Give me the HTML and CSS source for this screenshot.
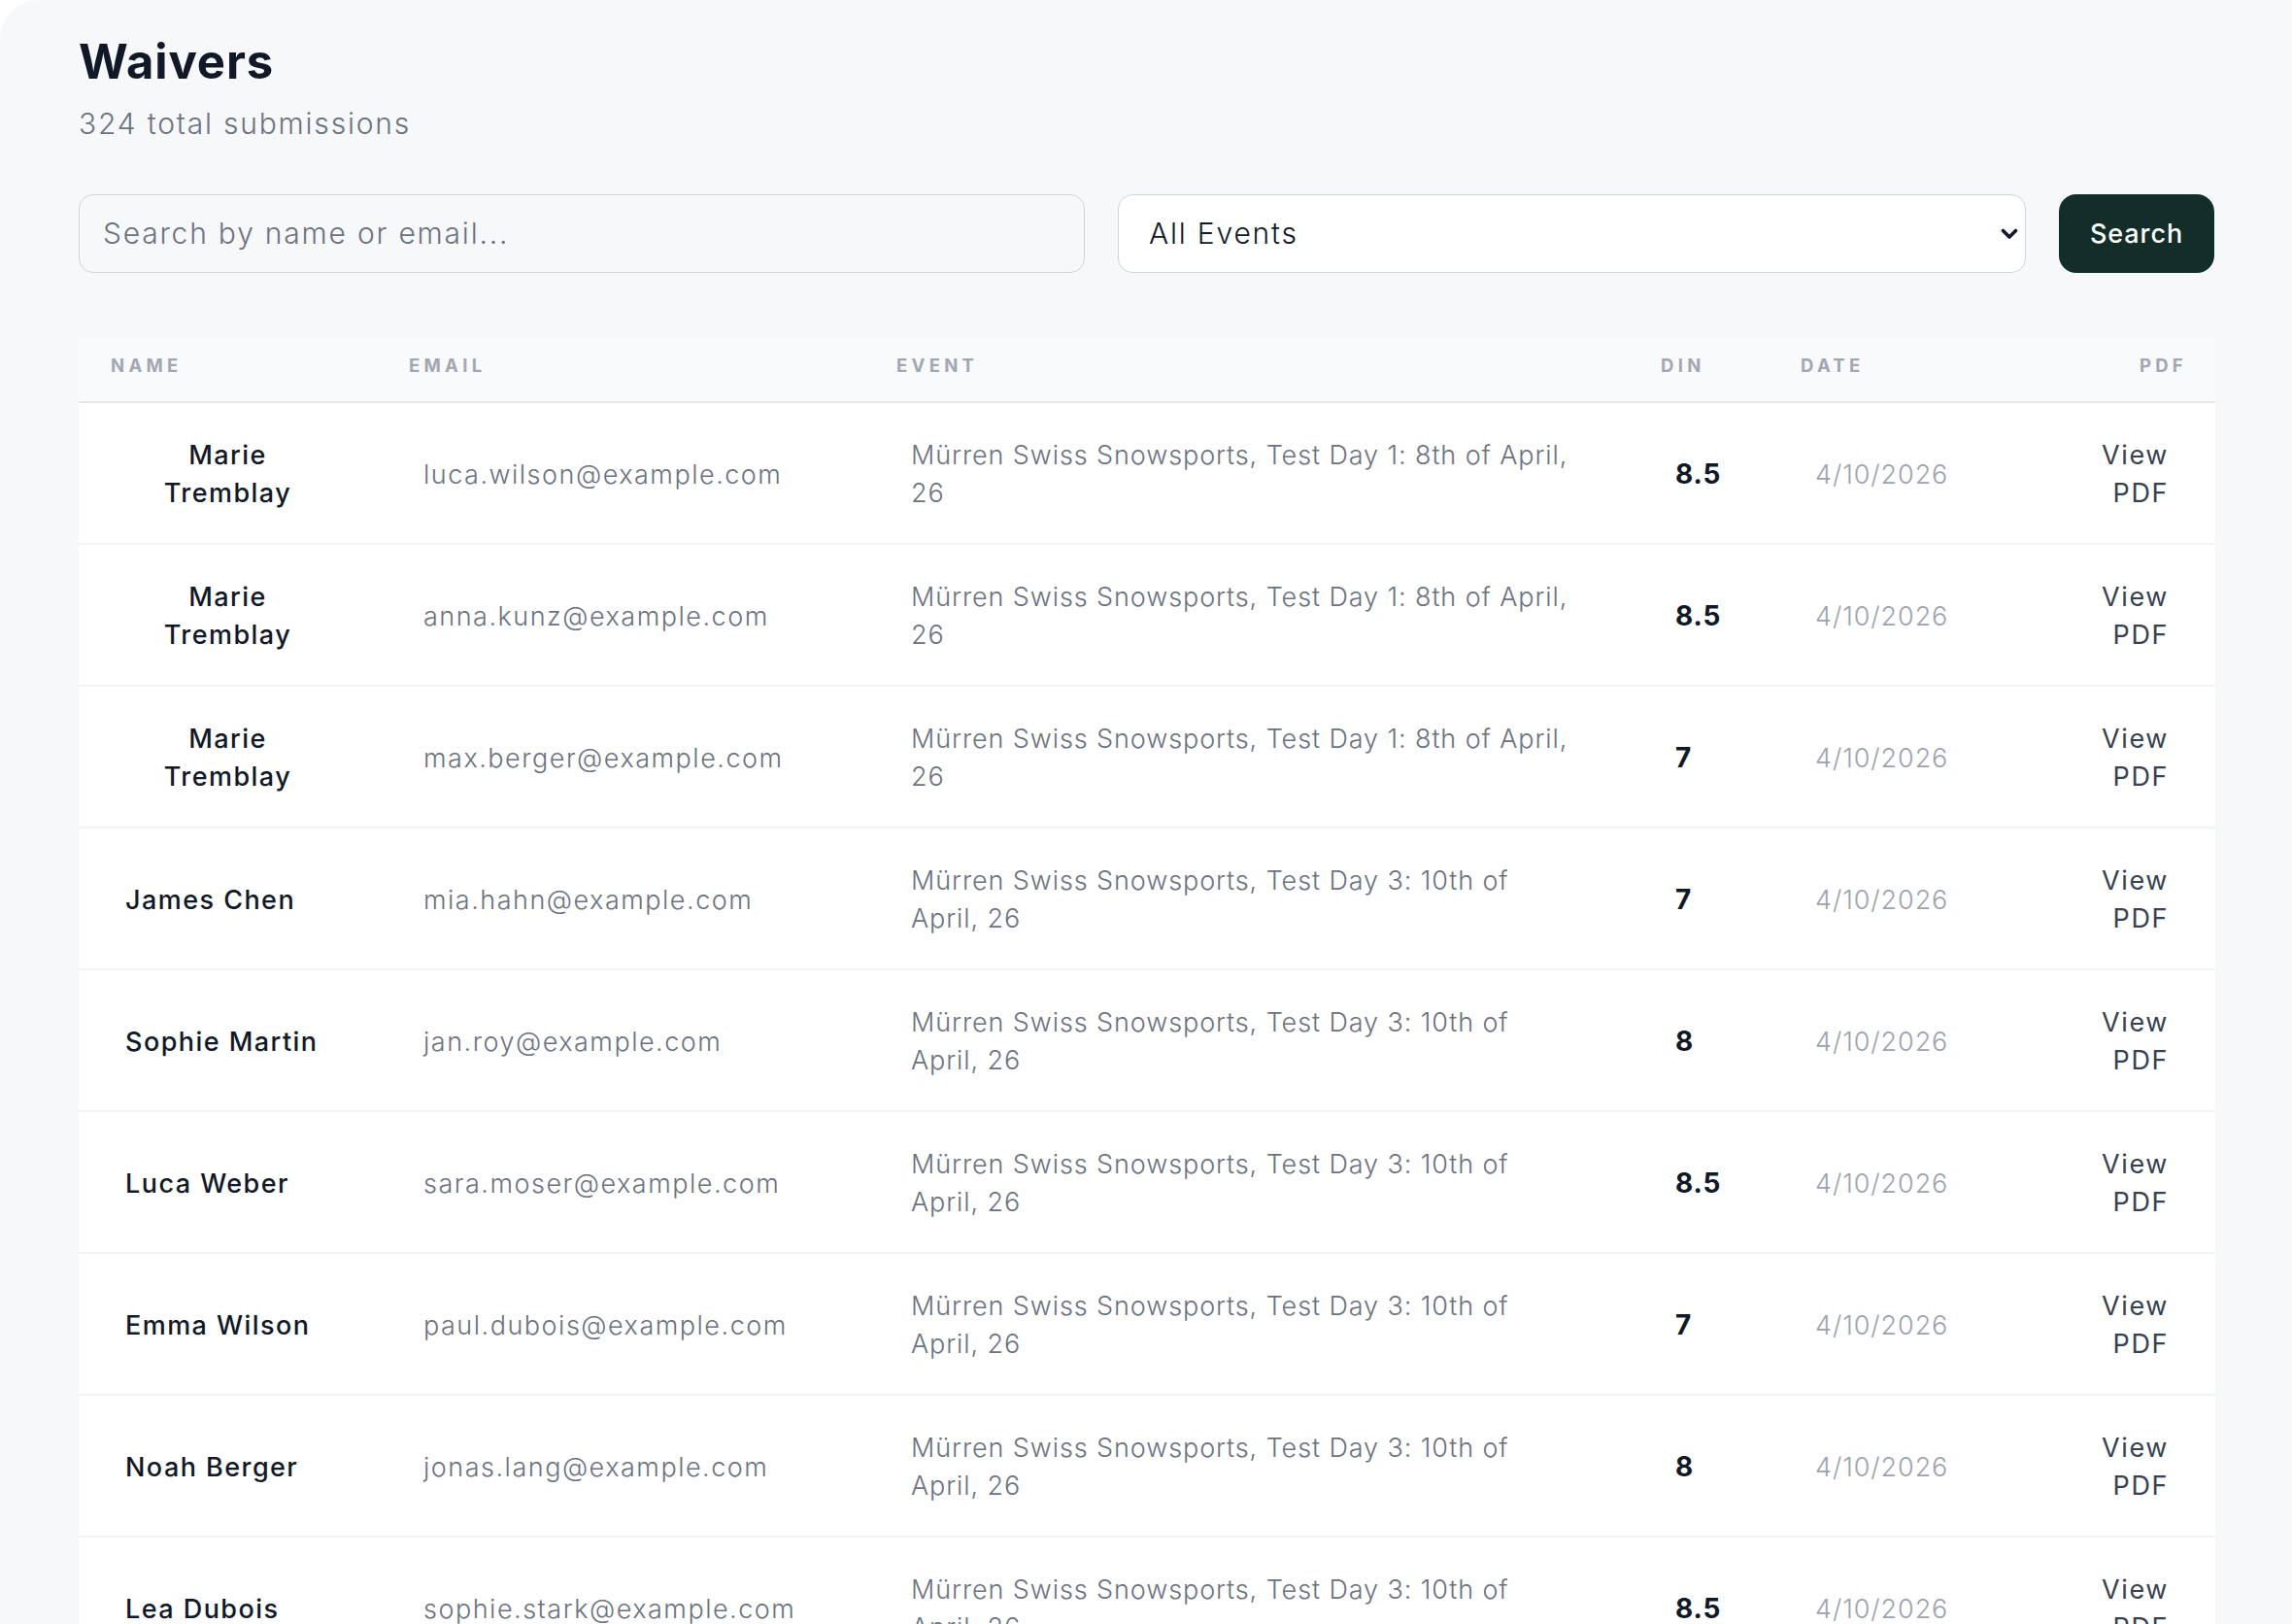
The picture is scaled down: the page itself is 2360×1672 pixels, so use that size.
FILE: index.html
```html
<!DOCTYPE html>
<html lang="en">
<head>
    <meta charset="UTF-8">
    <title>Waivers</title>
    <meta name="viewport" content="width=device-width, initial-scale=1.0">
    <link rel="stylesheet" href="styles.css">
</head>
<body>
    <main class="main">
        <h1 class="title">Waivers</h1>
        <p class="subtitle">324 total submissions</p>

        <form class="toolbar">
            <input class="search-input" type="text" name="q" placeholder="Search by name or email...">
            <div class="select-wrap">
                <select class="event-select" name="event">
                    <option>All Events</option>
                    <option>Mürren Swiss Snowsports, Test Day 1: 8th of April, 26</option>
                    <option>Mürren Swiss Snowsports, Test Day 3: 10th of April, 26</option>
                </select>
                <svg class="select-arrow" width="18" height="12" viewBox="0 0 18 12" fill="none" stroke="#111827" stroke-width="3.6" stroke-linecap="round" stroke-linejoin="round"><path d="M2.5 2.5 9 9l6.5-6.5"/></svg>
            </div>
            <button class="search-btn" type="submit">Search</button>
        </form>

        <table class="waivers">
            <colgroup>
                <col class="col-name">
                <col class="col-email">
                <col class="col-event">
                <col class="col-din">
                <col class="col-date">
                <col class="col-pdf">
            </colgroup>
            <thead>
                <tr>
                    <th>Name</th>
                    <th>Email</th>
                    <th>Event</th>
                    <th>DIN</th>
                    <th>Date</th>
                    <th class="right">PDF</th>
                </tr>
            </thead>
            <tbody>
                <tr>
                    <td><span class="name">Marie Tremblay</span></td>
                    <td class="email">luca.wilson@example.com</td>
                    <td class="event">Mürren Swiss Snowsports, Test Day 1: 8th of April, 26</td>
                    <td class="din">8.5</td>
                    <td class="date">4/10/2026</td>
                    <td class="right"><a class="pdf-link" href="#">View PDF</a></td>
                </tr>
                <tr>
                    <td><span class="name">Marie Tremblay</span></td>
                    <td class="email">anna.kunz@example.com</td>
                    <td class="event">Mürren Swiss Snowsports, Test Day 1: 8th of April, 26</td>
                    <td class="din">8.5</td>
                    <td class="date">4/10/2026</td>
                    <td class="right"><a class="pdf-link" href="#">View PDF</a></td>
                </tr>
                <tr>
                    <td><span class="name">Marie Tremblay</span></td>
                    <td class="email">max.berger@example.com</td>
                    <td class="event">Mürren Swiss Snowsports, Test Day 1: 8th of April, 26</td>
                    <td class="din">7</td>
                    <td class="date">4/10/2026</td>
                    <td class="right"><a class="pdf-link" href="#">View PDF</a></td>
                </tr>
                <tr>
                    <td><span class="name">James Chen</span></td>
                    <td class="email">mia.hahn@example.com</td>
                    <td class="event">Mürren Swiss Snowsports, Test Day 3: 10th of April, 26</td>
                    <td class="din">7</td>
                    <td class="date">4/10/2026</td>
                    <td class="right"><a class="pdf-link" href="#">View PDF</a></td>
                </tr>
                <tr>
                    <td><span class="name">Sophie Martin</span></td>
                    <td class="email">jan.roy@example.com</td>
                    <td class="event">Mürren Swiss Snowsports, Test Day 3: 10th of April, 26</td>
                    <td class="din">8</td>
                    <td class="date">4/10/2026</td>
                    <td class="right"><a class="pdf-link" href="#">View PDF</a></td>
                </tr>
                <tr>
                    <td><span class="name">Luca Weber</span></td>
                    <td class="email">sara.moser@example.com</td>
                    <td class="event">Mürren Swiss Snowsports, Test Day 3: 10th of April, 26</td>
                    <td class="din">8.5</td>
                    <td class="date">4/10/2026</td>
                    <td class="right"><a class="pdf-link" href="#">View PDF</a></td>
                </tr>
                <tr>
                    <td><span class="name">Emma Wilson</span></td>
                    <td class="email">paul.dubois@example.com</td>
                    <td class="event">Mürren Swiss Snowsports, Test Day 3: 10th of April, 26</td>
                    <td class="din">7</td>
                    <td class="date">4/10/2026</td>
                    <td class="right"><a class="pdf-link" href="#">View PDF</a></td>
                </tr>
                <tr>
                    <td><span class="name">Noah Berger</span></td>
                    <td class="email">jonas.lang@example.com</td>
                    <td class="event">Mürren Swiss Snowsports, Test Day 3: 10th of April, 26</td>
                    <td class="din">8</td>
                    <td class="date">4/10/2026</td>
                    <td class="right"><a class="pdf-link" href="#">View PDF</a></td>
                </tr>
                <tr>
                    <td><span class="name">Lea Dubois</span></td>
                    <td class="email">sophie.stark@example.com</td>
                    <td class="event">Mürren Swiss Snowsports, Test Day 3: 10th of April, 26</td>
                    <td class="din">8.5</td>
                    <td class="date">4/10/2026</td>
                    <td class="right"><a class="pdf-link" href="#">View PDF</a></td>
                </tr>
                <tr>
                    <td><span class="name">Tim Keller</span></td>
                    <td class="email">nina.frei@example.com</td>
                    <td class="event">Mürren Swiss Snowsports, Test Day 3: 10th of April, 26</td>
                    <td class="din">7</td>
                    <td class="date">4/10/2026</td>
                    <td class="right"><a class="pdf-link" href="#">View PDF</a></td>
                </tr>
            </tbody>
        </table>
    </main>
</body>
</html>
```

FILE: styles.css
```css
body {
    margin: 0;
    background: #ffffff;
    font-family: Inter, "Noto Sans", sans-serif;
    color: #111827;
}

.main {
    background: #f7f8fa;
    border-top-left-radius: 40px;
    min-height: 100vh;
    padding: 35px 80px 60px 81px;
    box-sizing: border-box;
}

.title {
    margin: 0;
    font-size: 49px;
    font-weight: 700;
    line-height: 1.2;
    color: #111827;
    letter-spacing: 0.9px;
}

.subtitle {
    margin: 13px 0 0;
    font-size: 30px;
    font-weight: 300;
    line-height: 40px;
    color: #6b7280;
    letter-spacing: 1.8px;
}

.toolbar {
    display: flex;
    gap: 34px;
    margin-top: 53px;
    height: 81px;
}

.search-input, .event-select {
    box-sizing: border-box;
    height: 81px;
    border: 1.5px solid #d1d5db;
    border-radius: 15px;
    font-family: inherit;
    font-size: 30px;
    font-weight: 300;
    letter-spacing: 1.8px;
    color: #111827;
}

.search-input {
    flex: 0 0 1036px;
    background: #f7f8fa;
    padding: 0 24px;
}

.search-input::placeholder {
    color: #6b7280;
}

.select-wrap {
    flex: 1;
    position: relative;
    display: flex;
}

.event-select {
    width: 100%;
    appearance: none;
    background: #ffffff;
    padding: 0 50px 0 31px;
}

.select-arrow {
    position: absolute;
    right: 8px;
    top: 35px;
    pointer-events: none;
}

.search-btn {
    flex: 0 0 160px;
    height: 81px;
    border: none;
    border-radius: 18px;
    background: #132d29;
    color: #ffffff;
    font-family: inherit;
    font-size: 27px;
    font-weight: 500;
    letter-spacing: 0.9px;
    cursor: pointer;
}

.waivers {
    width: 100%;
    margin-top: 66px;
    border-collapse: collapse;
    table-layout: fixed;
}

.col-name { width: 307px; }
.col-email { width: 502px; }
.col-event { width: 787px; }
.col-din { width: 144px; }
.col-date { width: 280px; }
.col-pdf { width: 180px; }

.waivers th {
    height: 46px;
    padding: 20px 33px 0;
    vertical-align: top;
    background: #f9fafb;
    border-bottom: 2px solid #e5e7eb;
    text-align: left;
    font-size: 18.5px;
    line-height: 18px;
    font-weight: 700;
    letter-spacing: 4.3px;
    text-transform: uppercase;
    color: #a1a7b3;
}

.waivers th.right {
    padding-right: 29px;
}

.waivers td {
    height: 141px;
    padding: 3px 48px 0;
    background: #ffffff;
    border-bottom: 2px solid #f3f4f6;
    font-size: 27px;
    line-height: 39px;
    vertical-align: middle;
}

.waivers .right {
    text-align: right;
}

.name {
    display: inline-block;
    text-align: center;
    font-weight: 500;
    letter-spacing: 1.45px;
    color: #111827;
}

.email {
    font-weight: 300;
    letter-spacing: 1.5px;
    color: #6b7280;
}

.event {
    font-weight: 300;
    letter-spacing: 0.9px;
    color: #6b7280;
}

.waivers td.din {
    font-size: 28px;
    font-weight: 700;
    letter-spacing: 0.9px;
    color: #111827;
}

.date {
    font-weight: 300;
    letter-spacing: 0.9px;
    color: #9ca3af;
}

.pdf-link {
    color: #374151;
    letter-spacing: 1.6px;
    text-decoration: none;
}
```
